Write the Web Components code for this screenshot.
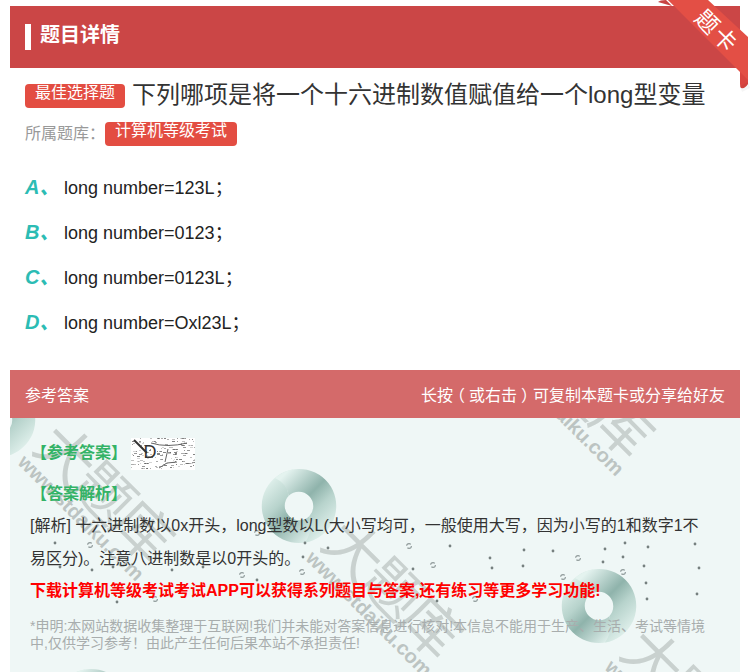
<!DOCTYPE html>
<html lang="zh">
<head>
<meta charset="utf-8">
<title>题目详情</title>
<style>
  html, body { margin: 0; height: 672px; overflow: hidden; background: #fff; }
  body { font-family: "Liberation Sans", "Noto Sans CJK SC", sans-serif; color: #333; }
  .mid { font-family: "Noto Sans CJK TC", sans-serif; }
</style>
</head>
<body>
<question-card>
  <corner-ribbon slot="ribbon"></corner-ribbon>
  <card-header slot="header">题目详情</card-header>
  <question-title slot="title" badge="最佳选择题" bank="计算机等级考试">下列哪项是将一个十六进制数值赋值给一个long型变量</question-title>
  <question-option slot="options" letter="A">long number=123L<span class="mid">；</span></question-option>
  <question-option slot="options" letter="B">long number=0123<span class="mid">；</span></question-option>
  <question-option slot="options" letter="C">long number=0123L<span class="mid">；</span></question-option>
  <question-option slot="options" letter="D">long number=Oxl23L<span class="mid">；</span></question-option>
  <answer-panel slot="answer"></answer-panel>
</question-card>

<script>
class QuestionCard extends HTMLElement {
    constructor() {
        super();
        this.attachShadow({ mode: 'open' });
        this.shadowRoot.innerHTML = `
            <style>
                :host { display: block; position: relative; padding: 6px 10px 0; }
                .options { display: flex; flex-direction: column; padding: 17px 15px 27px; }
            </style>
            <slot name="ribbon"></slot>
            <slot name="header"></slot>
            <slot name="title"></slot>
            <div class="options"><slot name="options"></slot></div>
            <slot name="answer"></slot>
        `;
    }
}

class CornerRibbon extends HTMLElement {
    constructor() {
        super();
        this.attachShadow({ mode: 'open' });
        this.shadowRoot.innerHTML = `
            <style>
                :host { position: absolute; right: 0; top: 0; width: 100px; height: 92px; z-index: 3; }
                svg { display: block; position: absolute; left: 0; top: 0; }
                span {
                    position: absolute; left: 40px; top: 18px; width: 56px; height: 24px; text-align: center;
                    transform: rotate(45deg); color: #fff; font-size: 23px; line-height: 24px; letter-spacing: 2px;
                    font-family: "Noto Sans CJK SC", sans-serif; white-space: nowrap;
                }
            </style>
            <svg width="100" height="92" viewBox="650 0 100 92">
                <path d="M668 0 L740 68 L740 50 L684 0Z" fill="#b93f3f" opacity=".45"/>
                <path d="M658 2 Q660 0 666 0 L672 6Z" fill="#c94343"/>
                <path d="M740 68 L748 76 L748 84 Q745 89 741 88 Q740 87 740 84Z" fill="#d9453f"/>
                <path d="M668 0 L708 0 L748 37 L748 80Z" fill="#e34f45"/>
                <path d="M740 86 L748 82 L750 88 L742 92Z" fill="#000" opacity=".04"/>
            </svg>
            <span>题卡</span>
        `;
    }
}

class CardHeader extends HTMLElement {
    constructor() {
        super();
        this.attachShadow({ mode: 'open' });
        this.shadowRoot.innerHTML = `
            <style>
                :host { display: flex; align-items: center; height: 62px; background: #cb4646; padding-left: 15px; color: #fff; }
                i { display: block; width: 6px; height: 26px; background: #fff; margin-right: 9px; }
                span { font-size: 20px; font-weight: bold; line-height: 26px; margin-top: -4px; }
            </style>
            <i></i><span><slot></slot></span>
        `;
    }
}

class QuestionTitle extends HTMLElement {
    constructor() {
        super();
        this.attachShadow({ mode: 'open' });
        const badge = this.getAttribute('badge');
        const bank = this.getAttribute('bank');
        this.shadowRoot.innerHTML = `
            <style>
                :host { display: block; padding: 10px 15px 0; }
                .row { display: flex; align-items: center; }
                .top { height: 33px; }
                .tag {
                    background: #e34d42; color: #fff; border-radius: 4px; font-size: 16px; height: 24px;
                    line-height: 17px; padding: 0 10px; box-sizing: border-box; white-space: nowrap;
                }
                .top .tag { margin: 3px 7px 0 0; }
                h1 { margin: 0; font-size: 24px; font-weight: normal; color: #333; line-height: 33px; white-space: nowrap; }
                .bank { margin-top: 11px; height: 24px; color: #999; font-size: 16px; align-items: flex-start; }
                .bank .tag { line-height: 18px; }
                .label { width: 80px; flex: none; line-height: 20px; white-space: nowrap; }
                .label em { font-style: normal; font-family: "Noto Sans CJK TC", sans-serif; }
            </style>
            <div class="row top"><span class="tag">${badge}</span><h1><slot></slot></h1></div>
            <div class="row bank"><span class="label">所属题库<em>：</em></span><span class="tag">${bank}</span></div>
        `;
    }
}

class QuestionOption extends HTMLElement {
    constructor() {
        super();
        this.attachShadow({ mode: 'open' });
        this.shadowRoot.innerHTML = `
            <style>
                :host { display: flex; align-items: center; height: 45px; }
                b { width: 39px; flex: none; color: #2cbcb4; font-size: 20px; font-style: italic; white-space: nowrap; }
                span { font-size: 18px; color: #222; white-space: nowrap; }
            </style>
            <b>${this.getAttribute('letter')}、</b><span><slot></slot></span>
        `;
    }
}

let swirlCount = 0;

class SwirlLogo extends HTMLElement {
    constructor() {
        super();
        this.attachShadow({ mode: 'open' });
        const id = 'swirl' + (++swirlCount);
        const blade = 'M14 10 A37 37 0 1 1 44 74.5 A30 30 0 0 0 48.25 48.25 A14.5 14.5 0 0 0 27.75 27.75 A24 24 0 0 0 14 10Z';
        this.shadowRoot.innerHTML = `
            <style>
                :host { position: absolute; width: 76px; height: 76px; left: var(--x); top: var(--y); }
                svg { display: block; }
            </style>
            <svg width="76" height="76" viewBox="0 0 76 76">
                <defs>
                    <linearGradient id="${id}" gradientUnits="userSpaceOnUse" x1="18" y1="12" x2="72" y2="66">
                        <stop offset="0" stop-color="#e4f3ef"/>
                        <stop offset=".42" stop-color="#8fb3ab"/>
                        <stop offset=".62" stop-color="#b7d3cc"/>
                        <stop offset="1" stop-color="#e8f6f2"/>
                    </linearGradient>
                </defs>
                <path d="${blade}" fill="url(#${id})" transform="rotate(180 38 38)"/>
                <path d="${blade}" fill="url(#${id})"/>
            </svg>
        `;
    }
}

class WaterMark extends HTMLElement {
    constructor() {
        super();
        this.attachShadow({ mode: 'open' });
        this.shadowRoot.innerHTML = `
            <style>
                :host {
                    position: absolute; left: var(--x); top: var(--y); width: 210px; color: #c9d1cf;
                    transform: rotate(45deg); transform-origin: 0 0; white-space: nowrap;
                    font-family: "Noto Sans CJK SC", sans-serif;
                }
                .big { font-size: 58px; line-height: 62px; letter-spacing: -4px; padding-top: 19px; }
                .url {
                    font-size: 20px; line-height: 26px; font-weight: bold; color: #bcc4c2; margin-top: -6px;
                    font-family: "Liberation Sans", sans-serif;
                }
            </style>
            <div class="big">大题库</div>
            <div class="url">www.stdaiku.com</div>
        `;
    }
}

class DotField extends HTMLElement {
    constructor() {
        super();
        this.attachShadow({ mode: 'open' });
        const rings = [[409,546],[433,565],[578,558],[563,577],[623,572],[475,599],[90,545],[242,575],[302,572],[155,599],[257,533]];
        const dots = [[450,546],[490,558],[492,568],[524,550],[553,551],[523,566],[605,549],[603,562],[623,557],[625,543],[648,547],[644,566],[646,583],[647,599],[695,544],[697,594],[699,568],[437,601],[413,569],[55,543],[60,567],[92,570],[113,567],[172,570],[203,567],[257,580],[303,557],[305,543],[328,548],[117,602]];
        this.shadowRoot.innerHTML = `
            <style>
                :host { position: absolute; left: -10px; top: -418px; width: 750px; height: 672px; }
                svg { display: block; }
            </style>
            <svg width="750" height="672">
                ${rings.map(p => `<circle cx="${p[0]}" cy="${p[1]}" r="2.4" fill="none" stroke="#8f9a9a" stroke-width="1.1" stroke-dasharray="5 2"/>`).join('')}
                ${dots.map(p => `<circle cx="${p[0]}" cy="${p[1]}" r="1.4" fill="#76807f"/>`).join('')}
            </svg>
        `;
    }
}

class NoiseStamp extends HTMLElement {
    constructor() {
        super();
        this.attachShadow({ mode: 'open' });
        let specks = '';
        let seed = 7;
        for (let i = 0; i < 170; i++) {
            seed = (seed * 137 + 41) % 1009;
            const x = seed % 64;
            seed = (seed * 137 + 41) % 1009;
            const y = seed % 31;
            specks += `<rect x="${x}" y="${y}" width="${1 + i % 3}" height="1" fill="#555" opacity="${0.25 + (i % 5) * 0.12}"/>`;
        }
        this.shadowRoot.innerHTML = `
            <style>
                :host { display: flex; position: relative; width: 64px; height: 32px; background: #fff; align-items: center; justify-content: center; color: #333; font-size: 18px; line-height: 20px; }
                svg { position: absolute; left: 0; top: 0; }
                span { position: relative; left: -13px; top: -2px; }
            </style>
            <svg width="64" height="32">
                ${specks}
                <path d="M3 2 L16 15" stroke="#333" stroke-width="2" fill="none"/>
                <path d="M20 5 Q36 10 56 5 M34 24 L37 11 M28 30 L36 25 L46 24" stroke="#666" stroke-width="1" fill="none"/>
            </svg>
            <span>D</span>
        `;
    }
}

class AnswerPanel extends HTMLElement {
    constructor() {
        super();
        this.attachShadow({ mode: 'open' });
        this.shadowRoot.innerHTML = `
            <style>
                :host { display: block; }
                .bar {
                    display: flex; justify-content: space-between; align-items: center; height: 48px; padding: 0 15px;
                    background: #d46a6a; color: #fff; font-size: 16px; position: relative; z-index: 2;
                }
                .shl { position: relative; left: -4px; }
                .shr { position: relative; left: 4px; }
                .body { position: relative; height: 254px; overflow: hidden; background: #eff7f6; }
                .content { position: relative; padding: 20px 40px 0 20px; }
                .key { display: flex; align-items: center; height: 32px; }
                .key b, .head { color: #33b366; font-size: 16px; font-weight: bold; line-height: 26px; white-space: nowrap; }
                .key b { margin: -2px 0 0 1px; width: 100px; flex: none; }
                .head { margin: 11px 0 1px 1px; }
                p { margin: 0; font-size: 16px; line-height: 33px; color: #333; }
                p span { font-family: "Noto Sans CJK TC", sans-serif; }
                .promo { color: #f00; font-weight: bold; font-size: 16px; line-height: 30px; white-space: nowrap; margin-top: 1px; }
                .note { color: #a8adad; font-size: 14px; line-height: 17px; margin-top: 12px; width: 680px; }
                .corner { --x: -50px; --y: -36px; }
                .a { --x: 251px; --y: 50px; }
                .b { --x: 551px; --y: 150px; }
                .c { --x: 43px; --y: 250px; }
            </style>
            <div class="bar"><span>参考答案</span><span>长按<span class="shl">（</span>或右击<span class="shr">）</span>可复制本题卡或分享给好友</span></div>
            <div class="body">
                <swirl-logo class="corner"></swirl-logo>
                <swirl-logo class="a"></swirl-logo>
                <swirl-logo class="b"></swirl-logo>
                <swirl-logo class="c"></swirl-logo>
                <water-mark style="--x:74px;--y:-22px"></water-mark>
                <water-mark style="--x:362px;--y:74px"></water-mark>
                <water-mark style="--x:554px;--y:-127px"></water-mark>
                <water-mark style="--x:661px;--y:183px"></water-mark>
                <dot-field></dot-field>
                <div class="content">
                    <div class="key"><b>【参考答案】</b><noise-stamp></noise-stamp></div>
                    <div class="head">【答案解析】</div>
                    <p>[解析] 十六进制数以0x开头<span>，</span>long型数以L(大小写均可<span>，</span>一般使用大写<span>，</span>因为小写的1和数字1不易区分)。注意八进制数是以0开头的。</p>
                    <div class="promo">下载计算机等级考试考试APP可以获得系列题目与答案,还有练习等更多学习功能!</div>
                    <div class="note">*申明:本网站数据收集整理于互联网!我们并未能对答案信息进行核对!本信息不能用于生产、生活、考试等情境中,仅供学习参考！由此产生任何后果本站不承担责任!</div>
                </div>
            </div>
        `;
    }
}

customElements.define('question-card', QuestionCard);
customElements.define('corner-ribbon', CornerRibbon);
customElements.define('card-header', CardHeader);
customElements.define('question-title', QuestionTitle);
customElements.define('question-option', QuestionOption);
customElements.define('swirl-logo', SwirlLogo);
customElements.define('water-mark', WaterMark);
customElements.define('dot-field', DotField);
customElements.define('noise-stamp', NoiseStamp);
customElements.define('answer-panel', AnswerPanel);
</script>
</body>
</html>
